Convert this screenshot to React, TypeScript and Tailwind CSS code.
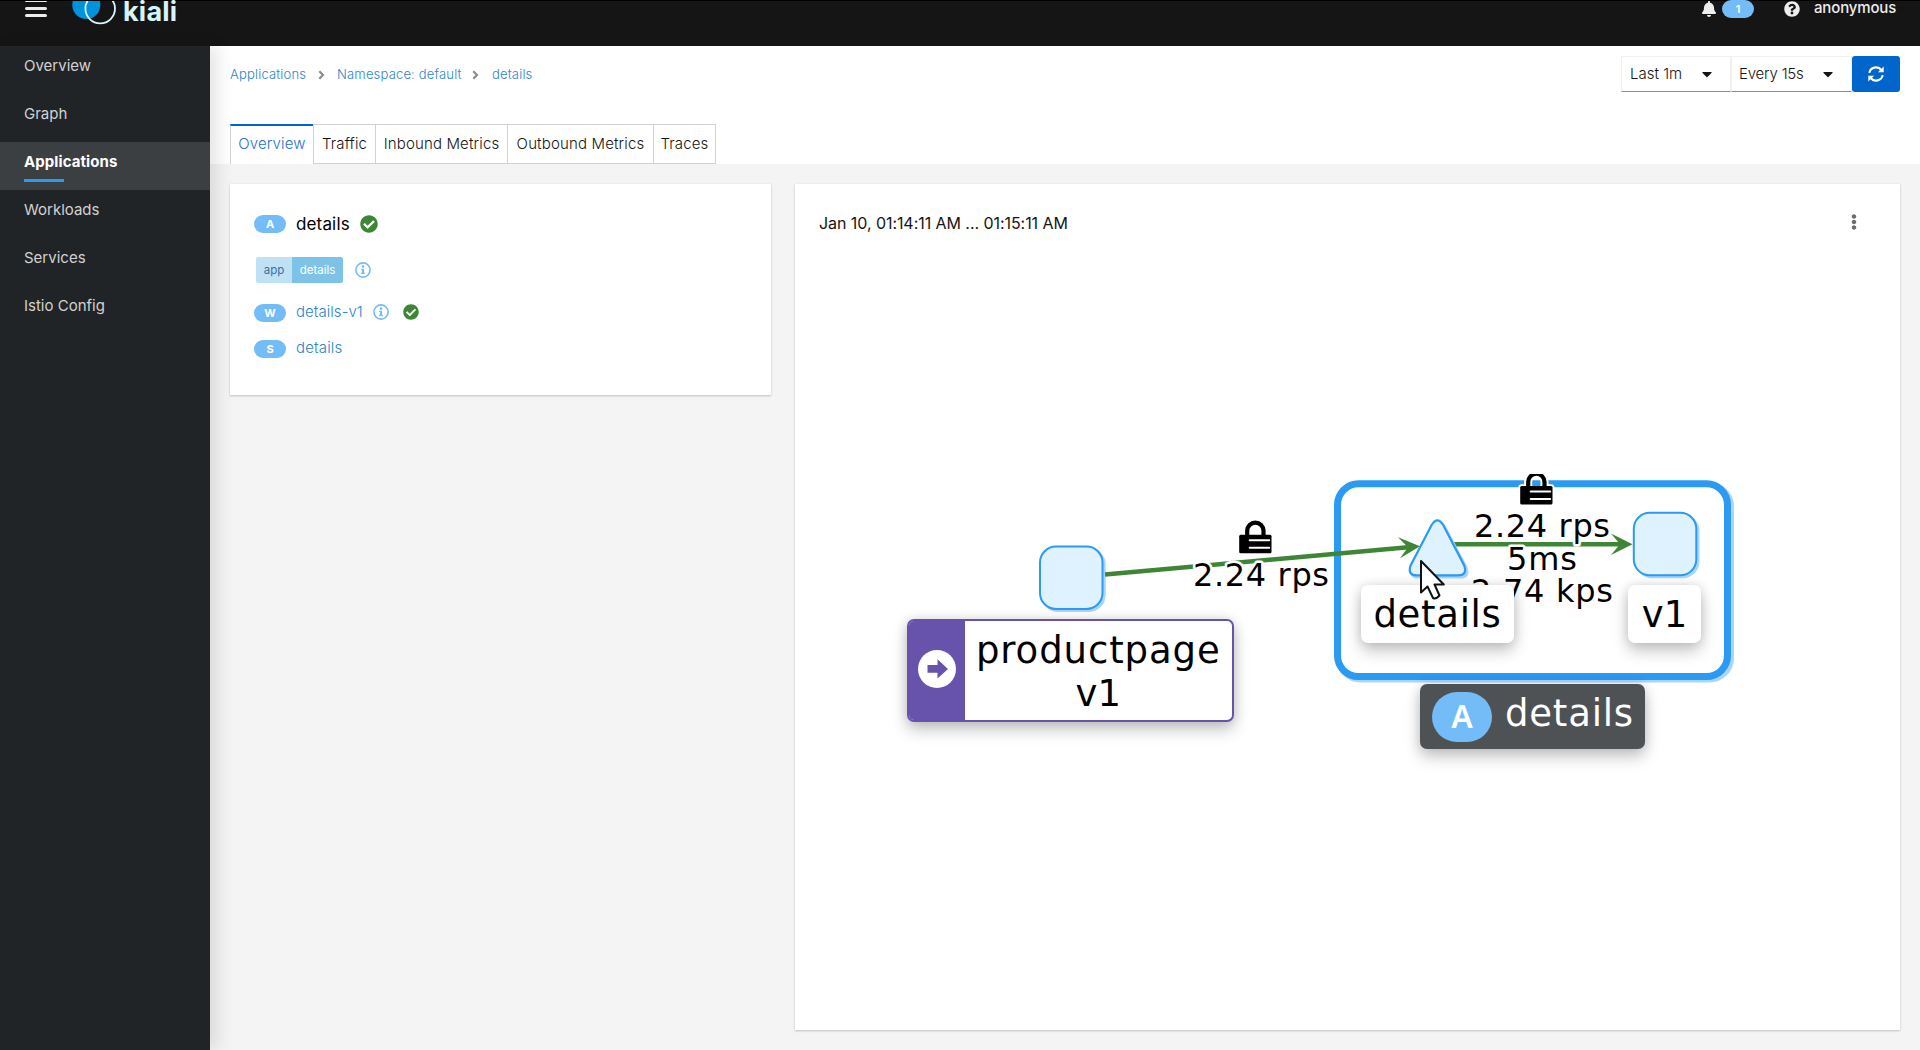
import React from 'react';
import { FaBell, FaQuestionCircle, FaCaretDown, FaCheckCircle, FaEllipsisV } from 'react-icons/fa';

const navItems = ['Overview', 'Graph', 'Applications', 'Workloads', 'Services', 'Istio Config'];

const tabs = [
  { label: 'Overview', width: 'w-[84px]' },
  { label: 'Traffic', width: 'w-[63px]' },
  { label: 'Inbound Metrics', width: 'w-[133px]' },
  { label: 'Outbound Metrics', width: 'w-[147px]' },
  { label: 'Traces', width: 'w-[63px]' },
];

function Masthead() {
  return (
    <header className="flex h-[46px] shrink-0 items-start justify-between border-t border-black bg-[#151515] pr-6 pl-[25px] text-[#ededed]">
      <div className="flex items-start">
        <div className="flex w-[22px] flex-col gap-[5px]">
          <span className="h-px rounded-b-sm bg-[#ededed]" />
          <span className="h-[3px] rounded-sm bg-[#ededed]" />
          <span className="mt-[-1px] h-[3px] rounded-sm bg-[#ededed]" />
        </div>
        <svg className="ml-[25px]" width="46" height="25" viewBox="72 1 46 25">
          <circle cx="86.3" cy="5" r="14" fill="#0093dd" />
          <circle cx="100.2" cy="8.6" r="14.8" fill="none" stroke="#d6f5ff" strokeWidth="1.8" />
        </svg>
        <span className="ml-[5px] mt-[-3px] text-[27px] leading-[28px] font-bold tracking-[0.2px] text-[#d6f5ff]">kiali</span>
      </div>
      <div className="flex h-4 items-center">
        <FaBell className="h-4 w-[14px]" />
        <span className="ml-[6px] flex h-[18px] w-8 items-center justify-center rounded-full bg-[#73bcf7] text-[11px] font-semibold text-white">1</span>
        <FaQuestionCircle className="ml-[30px] h-4 w-4" />
        <span className="mt-[-3px] ml-[14px] w-[82px] text-[15px] leading-[17px] font-medium tracking-[-0.15px]">anonymous</span>
      </div>
    </header>
  );
}

function Sidebar() {
  return (
    <nav className="z-10 w-[210px] shrink-0 bg-[#212427] shadow-[8px_0_16px_rgba(3,3,3,0.1)]">
      {navItems.map((item) => {
        const active = item === 'Applications';
        return (
          <a
            key={item}
            className={
              active
                ? 'block h-12 bg-[#3c3f42] px-6 pt-2 text-[15px] leading-6 font-bold tracking-[0.08px] text-white'
                : 'block h-12 px-6 pt-2 text-[15px] leading-6 text-[#d2d2d2]'
            }
          >
            {item}
            {active && <span className="mt-[5px] block h-[3px] w-10 bg-[#2b9af3]" />}
          </a>
        );
      })}
    </nav>
  );
}

function Chevron() {
  return (
    <svg width="7" height="10" viewBox="0 0 7 10">
      <path d="M1.3 1.2 5 5 1.3 8.8" fill="none" stroke="#8a8d90" strokeWidth="2.2" />
    </svg>
  );
}

function Breadcrumb() {
  return (
    <div className="flex items-center pt-[2px] text-[13px] font-[350] tracking-[0.18px] text-[#2b86cc]">
      <a className="w-[88px]">Applications</a>
      <Chevron />
      <a className="ml-[12px] w-[135px]">Namespace: default</a>
      <Chevron />
      <a className="ml-[13px]">details</a>
    </div>
  );
}

function Toolbar() {
  return (
    <div className="flex h-9 text-[15px] font-[350] text-[#151515]">
      <button className="flex w-[110px] items-center justify-between border border-[#f0f0f0] border-b-[#8a8d90] pr-[18px] pl-2">
        <span>Last 1m</span>
        <FaCaretDown className="h-4 w-[10px]" />
      </button>
      <button className="flex w-[121px] items-center justify-between border border-[#f0f0f0] border-b-[#8a8d90] pr-[18px] pl-[7px]">
        <span className="tracking-[-0.2px]">Every 15s</span>
        <FaCaretDown className="h-4 w-[10px]" />
      </button>
      <button className="flex w-12 items-center justify-center rounded-[3px] bg-[#0066cc] text-white">
        <svg width="16" height="16" viewBox="0 0 16 16" fill="none" stroke="#fff" strokeWidth="2.1">
          <path d="M1.3 6.9A6.8 6.8 0 0 1 13.3 4" />
          <path d="M14.7 9.1A6.8 6.8 0 0 1 2.7 12" />
          <path d="M15.7 0.4V6.2H9.9Z M0.3 15.6V9.8H6.1Z" fill="#fff" stroke="none" />
        </svg>
      </button>
    </div>
  );
}

function Tabs() {
  return (
    <div className="mt-8 flex h-10 text-[15px] font-[350] tracking-[0.15px]">
      {tabs.map((tab, i) => (
        <div
          key={tab.label}
          className={`${tab.width} ${
            i === 0
              ? 'mr-[-1px] flex shrink-0 items-center justify-center border-x border-t-2 border-x-[#d2d2d2] border-t-[#0066cc] pb-[2px] text-[#1f6fd0]'
              : 'mr-[-1px] flex shrink-0 items-center justify-center border border-[#d2d2d2] text-[#151515]'
          }`}
        >
          {tab.label}
        </div>
      ))}
    </div>
  );
}

function Pill({ children }: { children: string }) {
  return (
    <span className="flex h-[18px] w-8 items-center justify-center rounded-full bg-[#73bcf7] text-[11px] font-bold text-white">
      {children}
    </span>
  );
}

function Info() {
  return (
    <svg width="16" height="16" viewBox="0 0 16 16">
      <circle cx="8" cy="8" r="7.1" fill="none" stroke="#73bcf7" strokeWidth="1.6" />
      <circle cx="8" cy="4.6" r="1.3" fill="#73bcf7" />
      <path d="M6.2 6.7h2.9v4.1h0.9v1.3H6v-1.3h0.9V8H6.2z" fill="#73bcf7" />
    </svg>
  );
}

function DetailsCard() {
  return (
    <section className="h-[211px] w-[541px] shrink-0 bg-white pt-[31px] pl-6 shadow-[0_1px_2px_rgba(3,3,3,0.2),0_0_2px_rgba(3,3,3,0.06)]">
      <div className="flex h-[18px] items-center">
        <Pill>A</Pill>
        <span className="mt-[2px] ml-[10px] w-[54px] text-[17px] tracking-[0.15px] text-black">details</span>
        <FaCheckCircle className="ml-[10px] h-[18px] w-[18px] text-[#3e8635]" />
      </div>
      <div className="mt-6 ml-[2px] flex h-[26px] items-center text-[11.5px] leading-[26px]">
        <span className="w-9 rounded-l-[2px] bg-[#bee1f4] text-center text-[#39709f]">app</span>
        <span className="w-[51px] rounded-r-[2px] bg-[#7dc3e8] text-center text-white">details</span>
        <span className="ml-3"><Info /></span>
      </div>
      <div className="mt-[19px] flex h-5 items-center">
        <span className="mt-[2px]"><Pill>W</Pill></span>
        <a className="ml-[10px] w-[67px] text-[15px] font-[350] tracking-[0.05px] text-[#2b86cc]">details-v1</a>
        <span className="mt-[-1px] ml-[10px]"><Info /></span>
        <FaCheckCircle className="mt-[-1px] ml-[14px] h-4 w-4 text-[#3e8635]" />
      </div>
      <div className="mt-4 flex h-5 items-center">
        <span className="mt-[2px]"><Pill>S</Pill></span>
        <a className="ml-[10px] text-[15px] font-[350] tracking-[0.15px] text-[#2b86cc]">details</a>
      </div>
    </section>
  );
}

function Lock({ x, y }: { x: number; y: number }) {
  return (
    <g transform={`translate(${x} ${y})`}>
      <path d="M6 14.5V10a10 9.5 0 0 1 20 0V14.5H31Q32.3 14.5 32.3 16V31Q32.3 32.5 31 32.5H1.3Q0 32.5 0 31V16Q0 14.5 1.3 14.5Z" fill="none" stroke="#fff" strokeWidth="4" />
      <path d="M8 15V10.2A8 8 0 0 1 24.3 10.2V15" fill="none" stroke="#fff" strokeWidth="8" />
      <path d="M8 15V10.2A8 8 0 0 1 24.3 10.2V15" fill="none" stroke="#000" strokeWidth="4.2" />
      <rect y="14.3" width="32.3" height="18.4" rx="1.5" fill="#000" />
      <path d="M10.5 19.8H30M10.5 27.2H30" stroke="#fff" strokeWidth="2" strokeLinecap="round" />
    </g>
  );
}

function EdgeLabel({ x, y, width, children }: { x: number; y: number; width: number; children: string }) {
  return (
    <text
      x={x}
      y={y}
      textLength={width}
      fontFamily='"DejaVu Sans", sans-serif'
      fontSize="32"
      fill="#000"
      stroke="#fff"
      strokeWidth="5"
      strokeLinejoin="round"
      paintOrder="stroke"
    >
      {children}
    </text>
  );
}

const labelShadow = 'shadow-[0_8px_16px_rgba(0,0,0,0.22),0_0_12px_rgba(0,0,0,0.12)]';

function MiniGraph() {
  return (
    <>
      <svg className="absolute inset-0" width="1105" height="846" viewBox="795 184 1105 846">
        <rect x="1339.5" y="485.5" width="391" height="193.5" rx="21" fill="none" stroke="#a9d6fa" strokeWidth="7" />
        <rect x="1337.5" y="483.8" width="390" height="192.8" rx="21" fill="#fff" stroke="#2b9af3" strokeWidth="7" />
        <rect x="1042.2" y="548.5" width="62.5" height="62.5" rx="16" fill="#a9d6fa" stroke="#a9d6fa" strokeWidth="2" />
        <rect x="1040" y="546.5" width="62.5" height="62.5" rx="16" fill="#def3ff" stroke="#2b9af3" strokeWidth="2" />
        <rect x="1636" y="514.8" width="62.5" height="62.5" rx="16" fill="#a9d6fa" stroke="#a9d6fa" strokeWidth="2" />
        <rect x="1633.8" y="512.8" width="62.5" height="62.5" rx="16" fill="#def3ff" stroke="#2b9af3" strokeWidth="2" />
        <path d="M1105 574.6 1408 547.3" stroke="#3e8635" strokeWidth="4.5" />
        <path d="M1420 546.2 1398 537.3 1408 547.2 1400 558.2Z" fill="#3e8635" />
        <path d="M1453 544.3H1622" stroke="#3e8635" strokeWidth="4.6" />
        <path d="M1632.5 544.3 1611 533.5 1620 544.3 1611 555Z" fill="#3e8635" />
        <path d="M1433.9 526.6Q1439.4 517.6 1444.9 526.6L1466.4 567Q1470.4 577.6 1460.4 577.6H1418.4Q1408.4 577.6 1412.4 567Z" fill="#a9d6fa" stroke="#a9d6fa" strokeWidth="2" />
        <path d="M1431.6 525Q1437.4 515.6 1443.2 525L1464.2 565.5Q1467.5 575.3 1458.5 575.3H1416.4Q1407.4 575.3 1410.6 565.5Z" fill="#def3ff" stroke="#2b9af3" strokeWidth="2.2" />
        <Lock x={1239.2} y={520.5} />
        <Lock x={1520.2} y={471.7} />
        <rect x="1515" y="466" width="42" height="8" fill="#fff" />
        <EdgeLabel x={1193} y={585.7} width={136}>2.24 rps</EdgeLabel>
        <EdgeLabel x={1474} y={537} width={136}>2.24 rps</EdgeLabel>
        <EdgeLabel x={1507} y={569.7} width={70}>5ms</EdgeLabel>
        <EdgeLabel x={1471} y={602.3} width={142}>2.74 kps</EdgeLabel>
      </svg>

      <div className={`absolute top-[435px] left-[112px] flex h-[103px] w-[327px] overflow-hidden rounded-[7px] border-2 border-[#6753ac] bg-white font-['DejaVu_Sans',sans-serif] ${labelShadow}`}>
        <div className="flex w-[55.5px] shrink-0 items-center justify-center bg-[#6753ac]">
          <svg className="mb-[3px]" width="38" height="38" viewBox="0 0 38 38">
            <circle cx="19" cy="19" r="19" fill="#fff" />
            <path d="M9.5 15H19.5V9.3L30 19 19.5 28.5V22.7H9.5Z" fill="#6753ac" />
          </svg>
        </div>
        <div className="flex flex-1 flex-col items-center pt-[8px] text-[37px] leading-[43.3px] text-black">
          <span className="tracking-[0.9px]">productpage</span>
          <span>v1</span>
        </div>
      </div>

      <div className={`absolute top-[401px] left-[566px] flex h-[58px] w-[153px] items-center justify-center rounded-[7px] bg-white pt-px font-['DejaVu_Sans',sans-serif] text-[37px] tracking-[0.7px] text-black ${labelShadow}`}>
        details
      </div>
      <div className={`absolute top-[401px] left-[833px] flex h-[58px] w-[73px] items-center justify-center rounded-[7px] bg-white pt-px font-['DejaVu_Sans',sans-serif] text-[37px] text-black ${labelShadow}`}>
        v1
      </div>
      <div className={`absolute top-[500px] left-[625px] flex h-[65px] w-[225px] items-start rounded-[7px] bg-[#4f5255] pt-[8px] pl-3 font-['DejaVu_Sans',sans-serif] text-white ${labelShadow}`}>
        <span className="flex h-[50px] w-[60px] items-center justify-center rounded-[25px] bg-[#73bcf7] pb-[3px] font-['Noto_Sans',sans-serif] text-[32px] font-semibold">A</span>
        <span className="mt-[-2px] ml-[13px] text-[37px] leading-[48px] tracking-[0.8px]">details</span>
      </div>

      <svg className="absolute top-[375px] left-[624px]" width="28" height="42" viewBox="0 0 28 42">
        <path d="M2 2V33.5L8.5 27.5 14 39Q17 40.5 20.5 36.5L15.5 25.5H24.8Z" fill="#fff" stroke="#111" strokeWidth="2" strokeLinejoin="round" />
      </svg>
    </>
  );
}

function GraphCard() {
  return (
    <section className="relative h-[846px] w-[1105px] shrink-0 bg-white px-6 pt-6 shadow-[0_1px_2px_rgba(3,3,3,0.2),0_0_2px_rgba(3,3,3,0.06)]">
      <MiniGraph />
      <div className="flex h-[30px] items-center justify-between pr-[14px]">
        <span className="text-[16px] tracking-[-0.06px] text-[#151515]">Jan 10, 01:14:11 AM ... 01:15:11 AM</span>
        <FaEllipsisV className="mt-[-2px] h-4 w-4 text-[#6a6e73]" />
      </div>
    </section>
  );
}

export default function App() {
  return (
    <div className="flex h-[1050px] w-[1920px] flex-col overflow-hidden bg-[#f4f4f4] font-['Inter',sans-serif]">
      <Masthead />
      <div className="flex flex-1">
        <Sidebar />
        <main className="flex flex-1 flex-col">
          <div className="h-[118px] bg-white px-5 pt-[10px]">
            <div className="flex items-center justify-between">
              <Breadcrumb />
              <Toolbar />
            </div>
            <Tabs />
          </div>
          <div className="flex items-start gap-6 px-5 pt-5">
            <DetailsCard />
            <GraphCard />
          </div>
        </main>
      </div>
    </div>
  );
}
